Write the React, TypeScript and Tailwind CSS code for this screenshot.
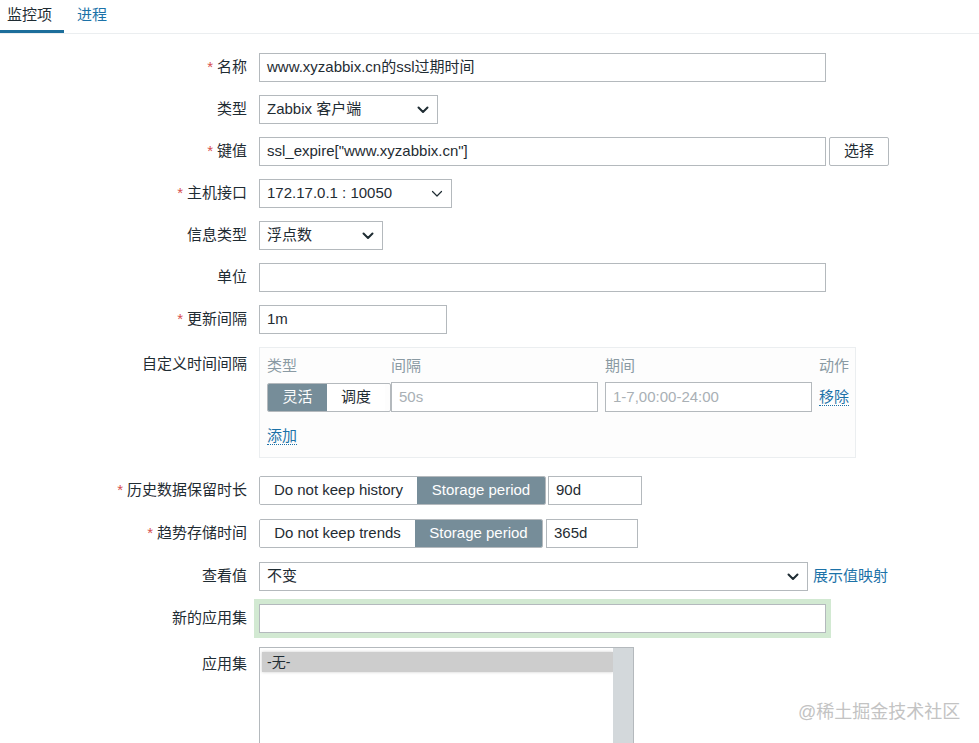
import React from "react";

const font = "font-['Liberation_Sans','Noto_Sans_CJK_SC',sans-serif]";

function Chevron({ thin }: { thin?: boolean }) {
    return (
        <svg width="12" height="8" viewBox="0 0 12 8" className="shrink-0">
            <path d="M1.5 1.5 L6 6 L10.5 1.5" fill="none" stroke="#1f2c33" strokeWidth={thin ? 1.2 : 2} strokeLinecap="round" strokeLinejoin="round" />
        </svg>
    );
}

function Row({ label, required, top, className, children }: { label: string; required?: boolean; top?: boolean; className?: string; children: React.ReactNode }) {
    return (
        <div className={`grid grid-cols-[247px_1fr] gap-x-3 ${top ? "items-start" : "items-center"} ${className ?? ""}`}>
            <div className={`text-right text-[#1f2c33] ${top ? "pt-[6px]" : ""}`}>
                {required && <span className="text-[#d64e4e] mr-[4px]">*</span>}
                {label}
            </div>
            <div className="flex items-center">{children}</div>
        </div>
    );
}

function Input({ w, value, placeholder, className }: { w: string; value?: string; placeholder?: string; className?: string }) {
    return (
        <div className={`h-[29px] border border-[#b4b9bd] bg-white flex items-center px-[7px] ${w} ${className ?? ""}`}>
            {value ? <span className="text-[#1f2c33] whitespace-nowrap">{value}</span> : <span className="text-[#a9b0b5] whitespace-nowrap">{placeholder}</span>}
        </div>
    );
}

function Select({ w, value, thin }: { w: string; value: string; thin?: boolean }) {
    return (
        <div className={`h-[29px] border border-[#b4b9bd] bg-white flex items-center justify-between pl-[7px] pr-[8px] ${w}`}>
            <span className="text-[#1f2c33] whitespace-nowrap">{value}</span>
            <Chevron thin={thin} />
        </div>
    );
}

function Segmented({ items, active, widths }: { items: string[]; active: number; widths: string[] }) {
    return (
        <div className="flex h-[29px] border border-[#b4b9bd] rounded-[2px] overflow-hidden shrink-0">
            {items.map((it, i) => (
                <div
                    key={it}
                    className={`flex items-center justify-center whitespace-nowrap ${widths[i]} ${i === active ? "bg-[#768d99] text-white" : "bg-white text-[#1f2c33]"}`}
                >
                    {it}
                </div>
            ))}
        </div>
    );
}

export default function App() {
    return (
        <div className={`${font} text-[15px] bg-white min-h-[743px] relative overflow-hidden`}>
            <div className="flex h-[34px] border-b border-[#ebeef0]">
                <div className="w-[64px] pl-[7px] pt-[4px] border-b-[3px] border-[#1c6e9b] text-[#1f2c33]">监控项</div>
                <div className="pl-[13px] pt-[4px] text-[#1c72a8]">进程</div>
            </div>

            <div className="flex flex-col gap-y-[13px] pt-[19px]">
                <Row label="名称" required>
                    <Input w="w-[567px]" value="www.xyzabbix.cn的ssl过期时间" />
                </Row>
                <Row label="类型">
                    <Select w="w-[179px]" value="Zabbix 客户端" />
                </Row>
                <Row label="键值" required>
                    <Input w="w-[567px]" value={'ssl_expire["www.xyzabbix.cn"]'} />
                    <div className="ml-[3px] h-[29px] w-[60px] border border-[#b4b9bd] rounded-[2px] flex items-center justify-center text-[#1f2c33]">选择</div>
                </Row>
                <Row label="主机接口" required>
                    <Select w="w-[193px]" value="172.17.0.1 : 10050" thin />
                </Row>
                <Row label="信息类型">
                    <Select w="w-[124px]" value="浮点数" />
                </Row>
                <Row label="单位">
                    <Input w="w-[567px]" />
                </Row>
                <Row label="更新间隔" required>
                    <Input w="w-[188px]" value="1m" />
                </Row>
                <Row label="自定义时间间隔" top>
                    <div className="w-[597px] h-[111px] border border-[#ebeef0] bg-[#fdfdfd] pl-[7px] pr-[4px] pt-[8px]">
                        <div className="flex text-[#8a9aa3] h-[20px] items-center whitespace-nowrap">
                            <div className="w-[124px]">类型</div>
                            <div className="w-[214px]">间隔</div>
                            <div className="w-[214px]">期间</div>
                            <div>动作</div>
                        </div>
                        <div className="flex items-center mt-[6px] h-[30px]">
                            <div className="w-[124px] shrink-0">
                                <Segmented items={["灵活", "调度"]} active={0} widths={["w-[59px]", "w-[58px]"]} />
                            </div>
                            <Input w="w-[207px] h-[30px] mr-[7px] shrink-0" placeholder="50s" />
                            <Input w="w-[207px] h-[30px] mr-[7px] shrink-0" placeholder="1-7,00:00-24:00" />
                            <span className="text-[#1c72a8] border-b border-dotted border-[#1c72a8] leading-[17px] whitespace-nowrap">移除</span>
                        </div>
                        <div className="mt-[13px]">
                            <span className="text-[#1c72a8] border-b border-dotted border-[#1c72a8] leading-[17px]">添加</span>
                        </div>
                    </div>
                </Row>
                <Row label="历史数据保留时长" required className="mt-[5px]">
                    <Segmented items={["Do not keep history", "Storage period"]} active={1} widths={["w-[157px]", "w-[128px]"]} />
                    <Input w="w-[94px] ml-[2px]" value="90d" />
                </Row>
                <Row label="趋势存储时间" required className="mt-[1px]">
                    <Segmented items={["Do not keep trends", "Storage period"]} active={1} widths={["w-[155px]", "w-[127px]"]} />
                    <Input w="w-[92px] ml-[3px]" value="365d" />
                </Row>
                <Row label="查看值" className="mt-[1px]">
                    <Select w="w-[549px]" value="不变" />
                    <span className="ml-[5px] text-[#1c72a8] whitespace-nowrap">展示值映射</span>
                </Row>
                <Row label="新的应用集">
                    <div className="h-[29px] w-[567px] border border-[#b4b9bd] bg-white shadow-[0_0_0_5px_#d2e9d2]" />
                </Row>
                <Row label="应用集" top className="mt-[1px]">
                    <div className="w-[375px] h-[112px] border border-[#b4b9bd] bg-white flex">
                        <div className="flex-1 pt-[4px] pl-[2px]">
                            <div className="h-[20px] bg-[#cdcdcd] flex items-center pl-[5px] text-[#1f2c33] text-[14px] shadow-[0_0_3px_#cdcdcd]">-无-</div>
                        </div>
                        <div className="w-[20px] bg-[#d3d8db]" />
                    </div>
                </Row>
            </div>

            <div className="absolute left-[798px] top-[699px] text-[18px] text-[#c3c3c3] whitespace-nowrap">@稀土掘金技术社区</div>
        </div>
    );
}
